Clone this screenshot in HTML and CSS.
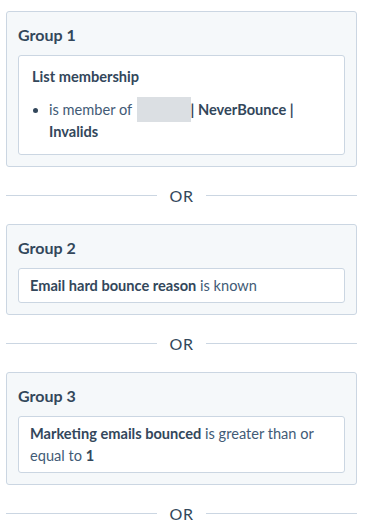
FILE: index.html
```html
<!DOCTYPE html>
<html lang="en">
<head>
    <meta charset="UTF-8">
    <meta name="viewport" content="width=device-width, initial-scale=1.0">
    <title>Filter groups</title>
    <link rel="stylesheet" href="styles.css">
</head>
<body>
    <div class="filters">
        <div class="group">
            <h3>Group 1</h3>
            <div class="rule rule-list">
                <div class="rule-title">List membership</div>
                <ul>
                    <li><span class="op">is member of</span> <span class="redacted"></span><b>| NeverBounce | Invalids</b></li>
                </ul>
            </div>
        </div>

        <div class="or"><span>OR</span></div>

        <div class="group">
            <h3>Group 2</h3>
            <div class="rule">
                <b>Email hard bounce reason</b> <span class="op">is known</span>
            </div>
        </div>

        <div class="or"><span>OR</span></div>

        <div class="group">
            <h3>Group 3</h3>
            <div class="rule">
                <b>Marketing emails bounced</b> <span class="op">is greater than or equal to</span> <b>1</b>
            </div>
        </div>

        <div class="or"><span>OR</span></div>
    </div>
</body>
</html>
```

FILE: styles.css
```css
body {
    margin: 0;
    font-family: Lato, "Open Sans", sans-serif;
    color: #33475b;
    background-color: #fff;
}
.filters {
    padding: 11px 9px 0 6px;
}
.group {
    background-color: #f5f8fa;
    border: 1px solid #cbd6e2;
    border-radius: 3px;
    padding: 13px 11px 11px 11px;
}
.group h3 {
    margin: 0 0 10px 0;
    font-size: 16px;
    line-height: 20px;
    font-weight: 700;
}
.rule {
    background-color: #fff;
    border: 1px solid #cbd6e2;
    border-radius: 3px;
    padding: 6px 11px 5px 11px;
    font-size: 14.6px;
    line-height: 22px;
}
.rule b {
    font-weight: 700;
}
.rule-list {
    padding: 10px 13px 11px 13px;
}
.rule-title {
    font-weight: 700;
}
.rule-list ul {
    margin: 11px 0 0 0;
    padding-left: 17px;
}
.op {
    color: #425b76;
}
.redacted {
    padding: 4px 27px;
    margin-left: 1px;
    background-color: #dbdfe3;
}
.or {
    display: flex;
    align-items: center;
    gap: 13px;
    height: 20px;
    margin: 18px 0 19px 0;
    font-size: 16px;
    letter-spacing: 0.5px;
}
.or::before,
.or::after {
    content: "";
    flex: 1;
    border-top: 1px solid #cbd6e2;
}
```
